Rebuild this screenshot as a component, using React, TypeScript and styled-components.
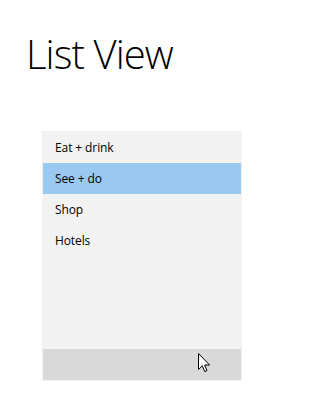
import styled, { createGlobalStyle } from 'styled-components';

const GlobalStyle = createGlobalStyle`
  html, body {
    margin: 0;
    padding: 0;
    background: #ffffff;
  }
  body {
    font-family: "Open Sans", "Liberation Sans", sans-serif;
  }
`;

const Page = styled.div`
  width: 286px;
  height: 394px;
  display: flex;
  flex-direction: column;
  padding: 26px 0 0 26px;
  box-sizing: border-box;
`;

const Title = styled.h1`
  margin: 0;
  font-size: 40px;
  line-height: 56px;
  font-weight: 300;
  color: #000;
  letter-spacing: -0.9px;
`;

const Panel = styled.div`
  margin: 49px 0 0 16px;
  width: 200px;
  height: 250px;
  box-sizing: border-box;
  border: 1px solid #f2f2f2;
  background: #f2f2f2;
  display: flex;
  flex-direction: column;
  position: relative;
`;

const List = styled.ul`
  list-style: none;
  margin: 0;
  padding: 0;
  flex: 1;
`;

const Item = styled.li<{ $selected?: boolean }>`
  height: 31px;
  display: flex;
  align-items: center;
  padding-left: 12px;
  font-size: 12px;
  letter-spacing: -0.1px;
  color: #000;
  background: ${(p) => (p.$selected ? '#99c9f0' : 'transparent')};
`;

const Footer = styled.div`
  height: 31px;
  background: #d9d9d9;
`;

const Cursor = styled.svg`
  position: absolute;
  left: 155px;
  top: 221px;
`;

const items = ['Eat + drink', 'See + do', 'Shop', 'Hotels'];

export default function App() {
  return (
    <>
      <GlobalStyle />
      <Page>
        <Title>List View</Title>
        <Panel>
          <List>
            {items.map((label) => (
              <Item key={label} $selected={label === 'See + do'}>
                {label}
              </Item>
            ))}
          </List>
          <Footer />
          <Cursor width="13" height="21" viewBox="0 0 13 21">
            <path
              d="M0.5 0.5 L0.5 16.5 L4.3 12.8 L6.8 18.6 L9 17.6 L6.6 12 L11.6 12 Z"
              fill="#fff"
              stroke="#000"
              strokeWidth="1"
              strokeLinejoin="miter"
            />
          </Cursor>
        </Panel>
      </Page>
    </>
  );
}
